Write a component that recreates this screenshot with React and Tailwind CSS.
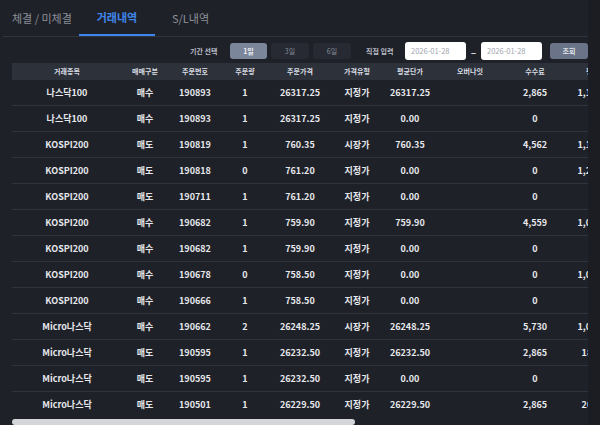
import React from "react";

const cols = [
  { label: "거래종목", w: "w-[110px]" },
  { label: "매매구분", w: "w-[46px]" },
  { label: "주문번호", w: "w-[54px]" },
  { label: "주문량", w: "w-[46px]" },
  { label: "주문가격", w: "w-[64px]" },
  { label: "가격유형", w: "w-[50px]" },
  { label: "평균단가", w: "w-[56px]" },
  { label: "오버나잇", w: "w-[64px]" },
  { label: "수수료", w: "w-[66px]" },
];

const rows = [
  ["나스닥100", "매수", "190893", "1", "26317.25", "지정가", "26317.25", "", "2,865", "1,195,400"],
  ["나스닥100", "매수", "190893", "1", "26317.25", "지정가", "0.00", "", "0", ""],
  ["KOSPI200", "매도", "190819", "1", "760.35", "시장가", "760.35", "", "4,562", "1,195,200"],
  ["KOSPI200", "매도", "190818", "0", "761.20", "지정가", "0.00", "", "0", "1,200,800"],
  ["KOSPI200", "매도", "190711", "1", "761.20", "지정가", "0.00", "", "0", ""],
  ["KOSPI200", "매수", "190682", "1", "759.90", "지정가", "759.90", "", "4,559", "1,095,000"],
  ["KOSPI200", "매수", "190682", "1", "759.90", "지정가", "0.00", "", "0", ""],
  ["KOSPI200", "매수", "190678", "0", "758.50", "지정가", "0.00", "", "0", "1,095,500"],
  ["KOSPI200", "매수", "190666", "1", "758.50", "지정가", "0.00", "", "0", ""],
  ["Micro나스닥", "매수", "190662", "2", "26248.25", "시장가", "26248.25", "", "5,730", "1,095,200"],
  ["Micro나스닥", "매도", "190595", "1", "26232.50", "지정가", "26232.50", "", "2,865", "186,250"],
  ["Micro나스닥", "매도", "190595", "1", "26232.50", "지정가", "0.00", "", "0", ""],
  ["Micro나스닥", "매도", "190501", "1", "26229.50", "지정가", "26229.50", "", "2,865", "200,500"],
];

const font = { fontFamily: '"Noto Sans CJK KR", "Noto Sans", sans-serif' };

function LastCell({ children }) {
  return (
    <div className="w-[20px] shrink-0 overflow-hidden">
      <div className="w-[62px] text-center whitespace-nowrap">{children}</div>
    </div>
  );
}

export default function App() {
  return (
    <div className="w-[600px] h-[425px] overflow-hidden bg-[#1b1d22] text-[#e6e8ec]" style={font}>
      <div className="w-[588px] h-[425px] bg-[#1f2128]">
        {/* Tabs */}
        <div className="flex h-[37px] border-b border-[#30343c] ml-[3px]">
          <div className="h-full w-[69px] flex items-center pl-[9px] text-[11px] text-[#8c9099] whitespace-nowrap">체결 / 미체결</div>
          <div className="h-full w-[76px] ml-[7px] flex items-center justify-center text-[11px] font-bold text-[#3f86ec] border-b-2 border-[#3f86ec] whitespace-nowrap">거래내역</div>
          <div className="h-full flex items-center ml-[17px] text-[11px] text-[#8c9099] whitespace-nowrap">S/L내역</div>
        </div>

        {/* Filter row */}
        <div className="flex items-center h-[26px] pt-[2px] pl-[190px] text-[7px]">
          <span className="text-[#b8bcc6] font-bold w-[40px] whitespace-nowrap">기간 선택</span>
          <div className="flex gap-[4px]">
            <button className="w-[37px] h-[16px] rounded-[3px] bg-[#7c869b] text-[#eef0f4] font-bold text-[7px]">1일</button>
            <button className="w-[38px] h-[16px] rounded-[3px] bg-[#272a32] text-[#858a98] text-[7px]">3일</button>
            <button className="w-[38px] h-[16px] rounded-[3px] bg-[#272a32] text-[#858a98] text-[7px]">6일</button>
          </div>
          <span className="ml-[15px] w-[39px] text-[#b8bcc6] font-bold whitespace-nowrap">직접 입력</span>
          <div className="w-[61px] h-[18px] rounded-[3px] bg-white text-[#a0a4ad] text-[7.5px] flex items-center pl-[6px]">2026-01-28</div>
          <span className="w-[15px] text-center text-[#d7dae0] text-[10px] font-bold">–</span>
          <div className="w-[61px] h-[18px] rounded-[3px] bg-white text-[#a0a4ad] text-[7.5px] flex items-center pl-[6px]">2026-01-28</div>
          <button className="ml-[8px] w-[38px] h-[16px] rounded-[3px] bg-[#6a7387] text-[#dfe2e8] font-bold text-[7px]">조회</button>
        </div>

        {/* Table */}
        <div className="ml-[12px] w-[576px] overflow-hidden">
          <div className="flex h-[17px] items-center bg-[#2d3139] text-[7px] font-bold text-[#d9dce2]">
            {cols.map((c) => (
              <div key={c.label} className={`${c.w} shrink-0 text-center whitespace-nowrap`}>{c.label}</div>
            ))}
            <LastCell>평가손익</LastCell>
          </div>
          {rows.map((r, i) => (
            <div key={i} className={`flex h-[26px] items-center text-[9px] font-bold ${i < rows.length - 1 ? "border-b border-[#30343c]" : ""}`}>
              {r.slice(0, 9).map((v, j) => (
                <div key={j} className={`${cols[j].w} shrink-0 text-center whitespace-nowrap`}>{v}</div>
              ))}
              <LastCell>{r[9]}</LastCell>
            </div>
          ))}
          <div className="h-[7px] flex items-center">
            <div className="w-[343px] h-[6px] rounded-full bg-[#d4d5d8]" />
          </div>
        </div>
      </div>
    </div>
  );
}
